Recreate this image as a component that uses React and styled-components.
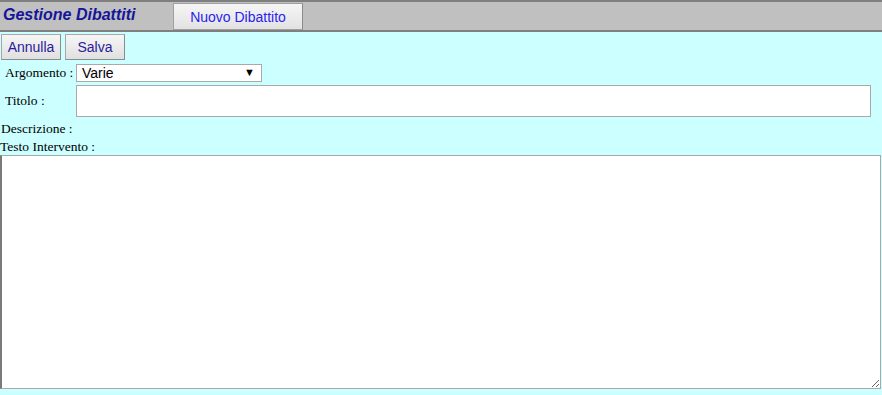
import React from "react";
import styled, { createGlobalStyle } from "styled-components";

const Global = createGlobalStyle`
  html, body { margin: 0; padding: 0; background: #ccffff; }
  body { font-family: "Liberation Serif", "Times New Roman", serif; font-size: 13px; color: #000; }
  * { box-sizing: border-box; }
`;

const Page = styled.div`
  width: 882px;
  height: 395px;
  background: #ccffff;
  display: flex;
  flex-direction: column;
  overflow: hidden;
`;

const Header = styled.div`
  height: 32px;
  background: #c0c0c0;
  border-top: 2px solid #7f7f7f;
  border-bottom: 2px solid #7f7f7f;
  display: flex;
  align-items: stretch;
  padding-left: 3px;
`;

const Title = styled.div`
  font-family: "Liberation Sans", Arial, sans-serif;
  font-weight: bold;
  font-style: italic;
  font-size: 16px;
  color: #15159a;
  width: 170px;
  display: flex;
  align-items: center;
  padding-bottom: 2px;
`;

const TabButton = styled.button`
  margin-top: 1px;
  width: 130px;
  height: 27px;
  border: 1px solid #a0a0a0;
  border-right-color: #8a8a8a;
  background: linear-gradient(#f6f6f6, #e2e2e2);
  font-family: "Liberation Sans", Arial, sans-serif;
  font-size: 14px;
  color: #2a1ef0;
  padding: 0;
  padding-top: 1px;
`;

const Toolbar = styled.div`
  display: flex;
  gap: 4px;
  padding: 2px 0 0 1px;
`;

const ActionButton = styled.button`
  width: 60px;
  height: 26px;
  border: 1px solid #a8a8a8;
  border-bottom-color: #8c8c8c;
  border-right-color: #8c8c8c;
  background: linear-gradient(#f6f6f6, #e0e0e0);
  font-family: "Liberation Sans", Arial, sans-serif;
  font-size: 14px;
  color: #2e1a9a;
  padding: 0;
`;

const Row = styled.div`
  display: flex;
  align-items: center;
  padding-left: ${(p) => p.$indent || 0}px;
  margin-top: ${(p) => p.$top || 0}px;
  height: ${(p) => p.$h}px;
`;

const Label = styled.span`
  width: ${(p) => p.$w || 71}px;
  font-size: 13.5px;
  white-space: nowrap;
`;

const Select = styled.div`
  width: 186px;
  height: 18px;
  background: #fff;
  border: 1px solid #a9a9a9;
  display: flex;
  align-items: center;
  justify-content: space-between;
  padding: 0 6px 0 5px;
  font-family: "Liberation Sans", Arial, sans-serif;
  font-size: 14px;
  color: #000;
`;

const Arrow = styled.span`
  font-size: 11px;
  line-height: 1;
`;

const TextInput = styled.input`
  width: 795px;
  height: 32px;
  background: #fff;
  border: 1px solid #a9a9a9;
  outline: none;
`;

const Plain = styled.div`
  font-size: 13.5px;
  height: ${(p) => p.$h || 19}px;
  line-height: ${(p) => p.$h || 19}px;
  margin-top: ${(p) => p.$top || 0}px;
  padding-left: ${(p) => p.$indent || 0}px;
  white-space: nowrap;
`;

const TextArea = styled.textarea`
  display: block;
  width: 881px;
  height: 234px;
  background: #fff;
  border: 1px solid #a9a9a9;
  border-left: 2px solid #7a7a7a;
  margin: 0;
  resize: both;
  outline: none;
`;

export default function App() {
  return (
    <>
      <Global />
      <Page>
        <Header>
          <Title>Gestione Dibattiti</Title>
          <TabButton>Nuovo Dibattito</TabButton>
        </Header>
        <Toolbar>
          <ActionButton>Annulla</ActionButton>
          <ActionButton>Salva</ActionButton>
        </Toolbar>
        <Row $indent={5} $h={21} $top={2}>
          <Label>Argomento :</Label>
          <Select>
            <span>Varie</span>
            <Arrow>▼</Arrow>
          </Select>
        </Row>
        <Row $indent={5} $h={33} $top={1}>
          <Label>Titolo :</Label>
          <TextInput />
        </Row>
        <Plain $indent={1} $top={2}>Descrizione :</Plain>
        <Plain $h={17}>Testo Intervento :</Plain>
        <TextArea />
      </Page>
    </>
  );
}
